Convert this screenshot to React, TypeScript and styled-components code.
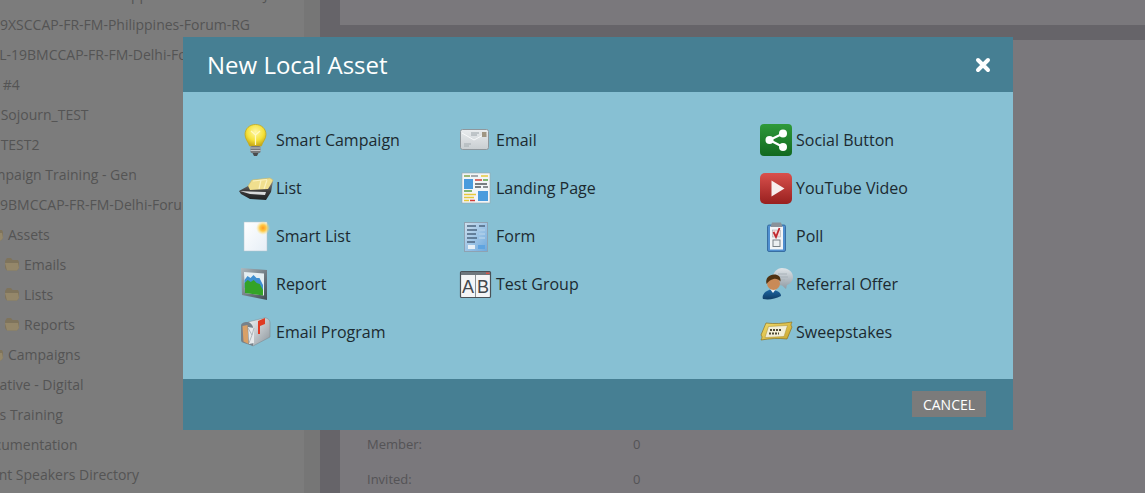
import * as React from "react";
import styled, { createGlobalStyle } from "styled-components";

const GlobalStyle = createGlobalStyle`
  *, *::before, *::after { box-sizing: border-box; }
  html, body {
    margin: 0;
    padding: 0;
    height: 100%;
    overflow: hidden;
    font-family: "Open Sans", "Liberation Sans", sans-serif;
  }
  #root { height: 100%; }
`;

const Page = styled.div`
  display: flex;
  height: 493px;
  width: 1145px;
  overflow: hidden;
  background: #7a787c;
`;

const Sidebar = styled.div`
  width: 304px;
  height: 100%;
  background: #7c7c7c;
  overflow: hidden;
  flex: none;
`;

const Tree = styled.div`
  margin-top: -21px;
`;

const TreeRow = styled.div<{ $indent: number }>`
  display: flex;
  align-items: center;
  gap: 4px;
  height: 30px;
  margin-left: ${(p) => p.$indent}px;
  font-size: 14px;
  color: #545454;
  white-space: nowrap;
`;

const Splitter = styled.div`
  width: 16px;
  flex: none;
  background: #767676;
`;

const Main = styled.div`
  flex: 1;
  display: flex;
  flex-direction: column;
  gap: 15px;
  padding-left: 20px;
  background: #666469;
`;

const TopCard = styled.div`
  height: 25px;
  flex: none;
  background: #7a787c;
`;

const ContentCard = styled.div`
  flex: 1;
  background: #7a787c;
  padding: 386px 0 0 27px;
`;

const StatRow = styled.div`
  display: grid;
  grid-template-columns: 266px 1fr;
  height: 35px;
  align-items: center;
  font-size: 13px;
  color: #545356;
`;

const Overlay = styled.div`
  position: fixed;
  inset: 0;
  padding: 37px 0 0 183px;
`;

const Modal = styled.div`
  width: 830px;
  height: 393px;
  display: flex;
  flex-direction: column;
  background: #87c0d3;
`;

const Header = styled.div`
  height: 55px;
  flex: none;
  display: flex;
  align-items: center;
  justify-content: space-between;
  padding: 0 22px 0 24px;
  background: #467f93;
`;

const Title = styled.div`
  font-size: 24px;
  color: #fff;
`;

const CloseButton = styled.button`
  display: flex;
  padding: 0;
  border: 0;
  background: none;
`;

const Body = styled.div`
  flex: 1;
  display: grid;
  grid-template-columns: 220px 300px 1fr;
  grid-auto-flow: column;
  grid-template-rows: repeat(5, 48px);
  padding: 24px 0 0 57px;
`;

const Item = styled.div`
  display: flex;
  align-items: center;
  gap: 4px;
  font-size: 16px;
  color: #1c2a30;
`;

const IconBox = styled.svg`
  width: 32px;
  height: 32px;
  flex: none;
  overflow: visible;
`;

const Footer = styled.div`
  height: 51px;
  flex: none;
  display: flex;
  align-items: flex-start;
  justify-content: flex-end;
  padding: 12px 27px 0 0;
  background: #467f93;
`;

const CancelButton = styled.button`
  width: 74px;
  height: 26px;
  padding: 0;
  border: 0;
  background: #7b7b7b;
  color: #fff;
  font-family: inherit;
  font-size: 14px;
`;

const BulbIcon = () => (
  <IconBox viewBox="0 0 32 32">
    <defs>
      <radialGradient id="bulb" cx="0.5" cy="0.35" r="0.65">
        <stop offset="0" stopColor="#fff7a8" />
        <stop offset="0.6" stopColor="#f5e23a" />
        <stop offset="1" stopColor="#c9a915" />
      </radialGradient>
    </defs>
    <path d="M15.5 0.5C9.5 0.5 5 4.8 5 10.5c0 4.6 3.4 7.4 4.6 11.5h11.8c1.2-4.1 4.6-6.9 4.6-11.5C26 4.8 21.5.5 15.5.5z" fill="url(#bulb)" stroke="#c4a81e" strokeWidth="0.8" />
    <path d="M11 7l4.5 4 4.5-4M15.5 11v10" stroke="#fff9c4" strokeWidth="1.2" fill="none" />
    <rect x="10.5" y="22" width="10" height="7" rx="1.5" fill="#77787a" />
    <path d="M10.5 24h10M10.5 26.5h10" stroke="#c3c5c7" strokeWidth="1" />
    <path d="M12.5 29h6l-1.5 3h-3z" fill="#4a4b4d" />
  </IconBox>
);

const ListIcon = () => (
  <IconBox viewBox="0 0 32 32">
    <defs>
      <linearGradient id="tray" x1="0" y1="0" x2="0" y2="1">
        <stop offset="0" stopColor="#8a8a8a" />
        <stop offset="0.55" stopColor="#3a3a3a" />
        <stop offset="1" stopColor="#1f2224" />
      </linearGradient>
    </defs>
    <path d="M8 14l4-6 18-2 3 2-4 10-19 2z" fill="#f0df8e" stroke="#c9b765" strokeWidth="0.6" />
    <path d="M13 9l14-1.500M21 8l-2 9M27 8l-3 9" stroke="#fbf2bf" strokeWidth="1.2" fill="none" />
    <path d="M-1 19l9-5 2 4 18-1 5-8-2 11-5 8-16-1-9-5z" fill="url(#tray)" />
    <path d="M0 19l10 .5 16 .5-1 3-15-1z" fill="#d9dbdc" />
  </IconBox>
);

const SmartListIcon = () => (
  <IconBox viewBox="0 0 32 32">
    <defs>
      <linearGradient id="page" x1="0" y1="0" x2="1" y2="1">
        <stop offset="0" stopColor="#ffffff" />
        <stop offset="1" stopColor="#e6eef6" />
      </linearGradient>
      <radialGradient id="sun">
        <stop offset="0" stopColor="#ff9a1f" />
        <stop offset="0.45" stopColor="#ffc945" />
        <stop offset="1" stopColor="#ffe98a" stopOpacity="0" />
      </radialGradient>
    </defs>
    <rect x="4" y="2" width="23" height="29" fill="url(#page)" stroke="#b5c2cc" strokeWidth="0.5" />
    <circle cx="23" cy="8" r="7" fill="url(#sun)" />
  </IconBox>
);

const ReportIcon = () => (
  <IconBox viewBox="0 0 32 32">
    <defs>
      <linearGradient id="frame" x1="0" y1="0" x2="1" y2="1">
        <stop offset="0" stopColor="#aeb8be" />
        <stop offset="1" stopColor="#3f4b53" />
      </linearGradient>
    </defs>
    <path d="M1 0l26 2v30L2 27z" fill="url(#frame)" />
    <path d="M4 4l20 1.5v22L5 25z" fill="#e4eef2" />
    <path d="M4.5 12l3-4 3 2 3-3 3 3 3 0 3.5 7v6L4.5 20z" fill="#3f8fd0" />
    <path d="M4.7 15l3-3 3 2 3-2 3 3 3 1 3.300 6v5.500L5 25z" fill="#34a328" />
  </IconBox>
);

const MailboxIcon = () => (
  <IconBox viewBox="0 0 32 32">
    <defs>
      <linearGradient id="box" x1="0" y1="0" x2="1" y2="1">
        <stop offset="0" stopColor="#f2f4f5" />
        <stop offset="1" stopColor="#8b949b" />
      </linearGradient>
    </defs>
    <path d="M8 6l16-4c3-.5 6 1.500 6 5v14L13 30l-5-3z" fill="url(#box)" stroke="#7b858b" strokeWidth="0.5" />
    <path d="M1 10c0-3 3-4 6-4 3 0 5 2 6 5v19l-9-3c-2-.5-3-1.500-3-3z" fill="#76818a" />
    <path d="M2.500 10l5-1 1 19-5-2.500z" fill="#d9a066" />
    <path d="M8 11l6 1v15l-5 1z" fill="#e6e9eb" />
    <path d="M8 12l4 7 2-7M9 27l3-8" stroke="#99a2a8" strokeWidth="0.7" fill="none" />
    <path d="M18 18V5l7-3v6l-5 2v8z" fill="#e03a22" />
  </IconBox>
);

const EmailIcon = () => (
  <IconBox viewBox="0 0 32 32">
    <defs>
      <linearGradient id="env" x1="0" y1="0" x2="0" y2="1">
        <stop offset="0" stopColor="#e9ecee" />
        <stop offset="1" stopColor="#c9ced1" />
      </linearGradient>
    </defs>
    <rect x="0.5" y="5.5" width="28" height="20" rx="2" fill="url(#env)" stroke="#8f979c" />
    <path d="M2 9l12 7 13-7" stroke="#f8f9fa" strokeWidth="1" fill="none" />
    <rect x="22" y="8" width="4.5" height="5" fill="#a09683" />
    <path d="M11 9h8M11 11h6" stroke="#9aa2a7" strokeWidth="1" />
    <path d="M4 20h7M4 22h5" stroke="#a4abb0" strokeWidth="1.2" />
  </IconBox>
);

const LandingIcon = () => (
  <IconBox viewBox="0 0 32 32">
    <rect x="2" y="1" width="28" height="30" fill="#f2f5f7" stroke="#9aa3a8" strokeWidth="0.6" />
    <path d="M4 4h6" stroke="#7fa54d" strokeWidth="1.5" />
    <path d="M11 4h7" stroke="#8a8f93" strokeWidth="1.5" />
    <path d="M21 4h7" stroke="#e7c83b" strokeWidth="1.5" />
    <rect x="4" y="7" width="9" height="10" fill="#4a9bdd" />
    <path d="M15 8h7" stroke="#d33c35" strokeWidth="1.5" />
    <path d="M23 8h5" stroke="#5ea145" strokeWidth="1.5" />
    <path d="M15 12h12M15 15h6" stroke="#50565b" strokeWidth="1.3" />
    <path d="M23 15h5" stroke="#50565b" strokeWidth="1.3" />
    <path d="M4 19h8" stroke="#5ea145" strokeWidth="1.5" />
    <path d="M4 22.5h12" stroke="#e7c83b" strokeWidth="1.5" />
    <path d="M4 25.5h10" stroke="#e7c83b" strokeWidth="1.5" />
    <path d="M4 28.5h5" stroke="#e7c83b" strokeWidth="1.5" />
    <path d="M10 28.5h5" stroke="#d33c35" strokeWidth="1.5" />
    <rect x="18" y="19" width="10" height="10" fill="#4a9bdd" />
  </IconBox>
);

const FormIcon = () => (
  <IconBox viewBox="0 0 32 32">
    <defs>
      <linearGradient id="form" x1="0" y1="0" x2="1" y2="1">
        <stop offset="0" stopColor="#cfe0ee" />
        <stop offset="1" stopColor="#6da9dd" />
      </linearGradient>
    </defs>
    <rect x="4.5" y="2.5" width="23" height="29" fill="url(#form)" stroke="#8ea2b2" />
    <path d="M7 6h9M19 6h6M7 10h10M7 14h9M7 18h10M7 22h8" stroke="#4c6580" strokeWidth="1.3" />
    <path d="M19 10h6M19 14h6M19 18h6" stroke="#a8cbe8" strokeWidth="1.8" />
    <rect x="8" y="25" width="7" height="4" fill="#e8f0f6" />
    <rect x="18" y="25" width="7" height="4" fill="#5fa4e0" />
  </IconBox>
);

const TestGroupIcon = () => (
  <IconBox viewBox="0 0 32 32">
    <rect x="0.5" y="3.5" width="30" height="26" rx="1" fill="#f4f5f6" stroke="#4a5157" strokeWidth="1.2" />
    <rect x="1" y="4" width="29" height="3" fill="#6e767c" />
    <rect x="26" y="4.5" width="3.5" height="1.5" fill="#d8534a" />
    <path d="M15.5 7v22" stroke="#8a9094" strokeWidth="1" />
    <text x="8" y="25" textAnchor="middle" fontSize="18" fontFamily="'Liberation Sans', sans-serif" fill="#43484d">A</text>
    <text x="23" y="25" textAnchor="middle" fontSize="18" fontFamily="'Liberation Sans', sans-serif" fill="#43484d">B</text>
  </IconBox>
);

const SocialIcon = () => (
  <IconBox viewBox="0 0 32 32">
    <defs>
      <linearGradient id="social" x1="0" y1="0" x2="0" y2="1">
        <stop offset="0" stopColor="#2f9a3a" />
        <stop offset="1" stopColor="#12681f" />
      </linearGradient>
    </defs>
    <rect x="0" y="0" width="32" height="32" rx="4" fill="url(#social)" />
    <path d="M23 9.5L9.5 16 23 23" stroke="#fff" strokeWidth="2.2" fill="none" />
    <circle cx="23" cy="9.5" r="4" fill="#fff" />
    <circle cx="9.5" cy="16" r="4" fill="#fff" />
    <circle cx="23" cy="23" r="4" fill="#fff" />
  </IconBox>
);

const YouTubeIcon = () => (
  <IconBox viewBox="0 0 32 32">
    <defs>
      <linearGradient id="yt" x1="0" y1="0" x2="0" y2="1">
        <stop offset="0" stopColor="#d9504c" />
        <stop offset="1" stopColor="#98201f" />
      </linearGradient>
    </defs>
    <rect x="0" y="1" width="32" height="31" rx="5" fill="url(#yt)" />
    <path d="M11.5 8.5l13 8-13 8z" fill="#f7eeee" />
  </IconBox>
);

const PollIcon = () => (
  <IconBox viewBox="0 0 32 32">
    <rect x="7.500" y="5" width="18" height="26.5" rx="1.5" fill="#4f8fd0" stroke="#2c5f96" strokeWidth="0.8" />
    <rect x="10" y="6.5" width="13" height="23" fill="#f3f5f7" />
    <path d="M12 2.5h9l1.5 4.5h-12z" fill="#8a9299" />
    <rect x="12.5" y="10" width="8" height="7" fill="#f3dcdc" stroke="#9aa2a7" strokeWidth="0.5" />
    <path d="M13.5 12l2.500 5 3.500-9" stroke="#c0272d" strokeWidth="1.8" fill="none" />
    <rect x="13" y="20" width="7" height="6.5" fill="#eceff1" stroke="#7a8287" strokeWidth="1" />
  </IconBox>
);

const ReferralIcon = () => (
  <IconBox viewBox="0 0 32 32">
    <defs>
      <linearGradient id="bubble" x1="0" y1="0" x2="0" y2="1">
        <stop offset="0" stopColor="#dfe4e8" />
        <stop offset="1" stopColor="#8f9aa3" />
      </linearGradient>
      <linearGradient id="suit" x1="0" y1="0" x2="0" y2="1">
        <stop offset="0" stopColor="#1f6aa8" />
        <stop offset="1" stopColor="#0f3d66" />
      </linearGradient>
    </defs>
    <path d="M22 0c5 0 11 3 11 9 0 4-3 7-6 8l-1 4-4-3.500c-5 0-9-4-9-8.500S17 0 22 0z" fill="url(#bubble)" />
    <path d="M18 6h9M18 9h10M18 12h7" stroke="#a9b2b9" strokeWidth="1" />
    <path d="M3 31c-1-2 0-6 4-8l4-2 6 2c3 1 4 3 4 5-6 3-12 4-18 3z" fill="url(#suit)" />
    <path d="M10 21l3 4 3-4z" fill="#e9eef2" />
    <circle cx="13.500" cy="15.500" r="6.500" fill="#c98a58" />
    <path d="M6.500 16c-1.500-6 3-9.500 7.500-9.500s7 2.500 6.500 7c-2-2-4-3-7-2.500-3 .5-5 2.500-7 5z" fill="#4f3212" />
  </IconBox>
);

const SweepstakesIcon = () => (
  <IconBox viewBox="0 0 32 32">
    <defs>
      <linearGradient id="ticket" x1="0" y1="0" x2="1" y2="1">
        <stop offset="0" stopColor="#f2dc6c" />
        <stop offset="1" stopColor="#c9a52c" />
      </linearGradient>
    </defs>
    <path d="M6 7c8 1 17 .5 26-1-1 2-1.500 3.500 0 5-2 4-3 8-5 12-8-1-17-.5-26 1 1-2 1.500-3.500 0-5 2-4 3-8 5-12z" fill="url(#ticket)" stroke="#8f7420" strokeWidth="0.7" />
    <path d="M8.500 10.500l19-1-3.500 11-19 1z" fill="#f3efd7" stroke="#a58d35" strokeWidth="0.5" />
    <path d="M10 14h11M9 17.500h10" stroke="#4f4a35" strokeWidth="1.800" strokeDasharray="2 1" />
  </IconBox>
);

type TreeEntry = { label: string; indent: number; folder?: boolean };

// sidebar is cut off on the left, the negative indent keeps the same clipping
const treeRows: TreeEntry[] = [
  { label: "ADBCAP-FR-FM-Philippines-Forum-NewYJune", indent: 0 },
  { label: "19XSCCAP-FR-FM-Philippines-Forum-RG", indent: -8 },
  { label: "FL-19BMCCAP-FR-FM-Delhi-Forum-RG", indent: -8 },
  { label: "t #4", indent: -6 },
  { label: "t Sojourn_TEST", indent: -8 },
  { label: "t TEST2", indent: -8 },
  { label: "Campaign Training - Gen", indent: -24 },
  { label: "19BMCCAP-FR-FM-Delhi-Forum-RG", indent: -8 },
  { label: "Assets", indent: -12, folder: true },
  { label: "Emails", indent: 4, folder: true },
  { label: "Lists", indent: 4, folder: true },
  { label: "Reports", indent: 4, folder: true },
  { label: "Campaigns", indent: -12, folder: true },
  { label: "Creative - Digital", indent: -23 },
  { label: "ers Training", indent: -14 },
  { label: "Documentation", indent: -24 },
  { label: "Event Speakers Directory", indent: -24 },
];

const Folder = () => (
  <svg width="16" height="16" viewBox="0 0 16 16">
    <path d="M1 5l2-3h4l1.500 2H14l1 2v6l-2 2.500H3l-2-2.500z" fill="#7f745c" />
    <path d="M1 7h13l1 5-2 2.500H3z" fill="#94876a" />
  </svg>
);

const CloseIcon = () => (
  <svg width="16" height="16" viewBox="0 0 16 16">
    <path d="M3 3l10 10M13 3L3 13" stroke="#fff" strokeWidth="4" strokeLinecap="round" />
  </svg>
);

const assets: { label: string; icon: React.ReactNode }[] = [
  { label: "Smart Campaign", icon: <BulbIcon /> },
  { label: "List", icon: <ListIcon /> },
  { label: "Smart List", icon: <SmartListIcon /> },
  { label: "Report", icon: <ReportIcon /> },
  { label: "Email Program", icon: <MailboxIcon /> },
  { label: "Email", icon: <EmailIcon /> },
  { label: "Landing Page", icon: <LandingIcon /> },
  { label: "Form", icon: <FormIcon /> },
  { label: "Test Group", icon: <TestGroupIcon /> },
  { label: "", icon: null },
  { label: "Social Button", icon: <SocialIcon /> },
  { label: "YouTube Video", icon: <YouTubeIcon /> },
  { label: "Poll", icon: <PollIcon /> },
  { label: "Referral Offer", icon: <ReferralIcon /> },
  { label: "Sweepstakes", icon: <SweepstakesIcon /> },
];

export default function App() {
  return (
    <>
      <GlobalStyle />
      <Page>
        <Sidebar>
          <Tree>
            {treeRows.map((row) => (
              <TreeRow key={row.label} $indent={row.indent}>
                {row.folder && <Folder />}
                {row.label}
              </TreeRow>
            ))}
          </Tree>
        </Sidebar>
        <Splitter />
        <Main>
          <TopCard />
          <ContentCard>
            <StatRow>
              <span>Member:</span>
              <span>0</span>
            </StatRow>
            <StatRow>
              <span>Invited:</span>
              <span>0</span>
            </StatRow>
          </ContentCard>
        </Main>
      </Page>
      <Overlay>
        <Modal>
          <Header>
            <Title>New Local Asset</Title>
            <CloseButton aria-label="Close">
              <CloseIcon />
            </CloseButton>
          </Header>
          <Body>
            {assets.map((asset, i) => (
              <Item key={i}>
                {asset.icon}
                {asset.label}
              </Item>
            ))}
          </Body>
          <Footer>
            <CancelButton>CANCEL</CancelButton>
          </Footer>
        </Modal>
      </Overlay>
    </>
  );
}
